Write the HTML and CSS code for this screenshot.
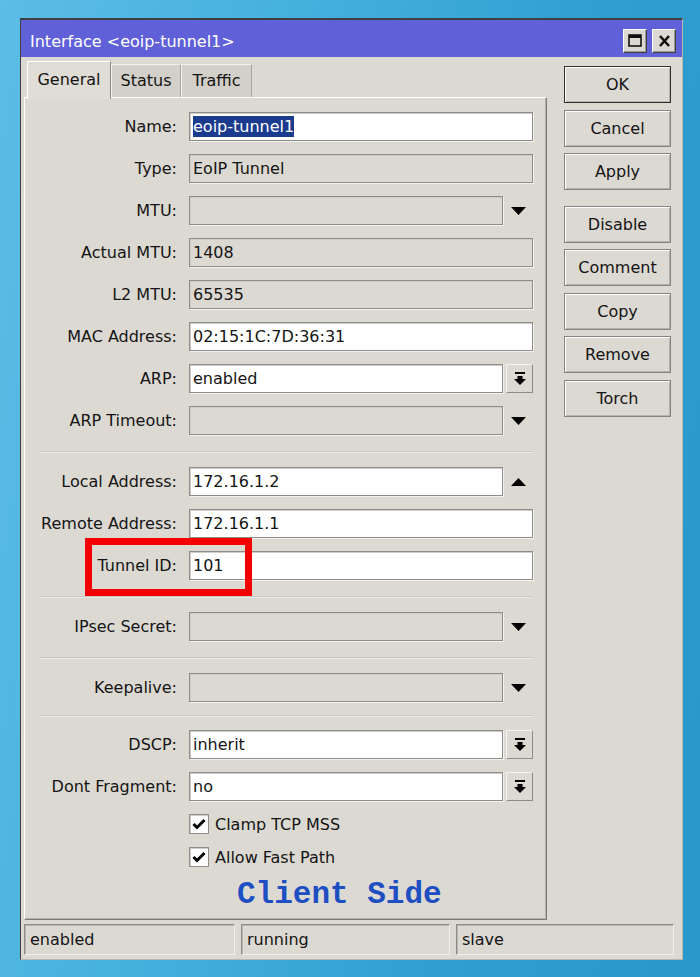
FILE: index.html
```html
<!DOCTYPE html>
<html lang="en">
  <head>
    <meta charset="UTF-8" />
    <meta name="viewport" content="width=device-width, initial-scale=1.0" />
    <title>Interface &lt;eoip-tunnel1&gt;</title>
    <link rel="stylesheet" href="styles.css">
  </head>

  <body>
    <div class="desktop">
      <div class="window">
        <!-- title bar -->
        <div class="titlebar">
          <span class="title">Interface &lt;eoip-tunnel1&gt;</span>
          <div class="title-btns">
            <span class="tbtn">
              <svg width="14" height="13" viewBox="0 0 14 13"><rect x="1" y="1" width="12" height="11" fill="none" stroke="#111" stroke-width="1.6"/><rect x="1" y="1" width="12" height="3" fill="#111"/></svg>
            </span>
            <span class="tbtn">
              <svg width="13" height="12" viewBox="0 0 13 12"><path d="M2 1 L11 11 M11 1 L2 11" stroke="#111" stroke-width="2.6"/></svg>
            </span>
          </div>
        </div>

        <div class="window-body">
          <div class="left">
            <!-- tabs -->
            <div class="tabs">
              <span class="tab active">General</span>
              <span class="tab tab-status">Status</span>
              <span class="tab tab-traffic">Traffic</span>
            </div>

            <div class="panel">
              <div class="form">
                <div class="row">
                  <label>Name:</label>
                  <div class="field"><span class="sel">eoip-tunnel1</span></div>
                </div>
                <div class="row">
                  <label>Type:</label>
                  <div class="field off">EoIP Tunnel</div>
                </div>
                <div class="row">
                  <label>MTU:</label>
                  <div class="field off"></div>
                  <span class="arrow"><svg width="15" height="8" viewBox="0 0 15 8"><polygon points="0,0 15,0 7.5,8" fill="#000"/></svg></span>
                </div>
                <div class="row">
                  <label>Actual MTU:</label>
                  <div class="field off">1408</div>
                </div>
                <div class="row">
                  <label>L2 MTU:</label>
                  <div class="field off">65535</div>
                </div>
                <div class="row">
                  <label>MAC Address:</label>
                  <div class="field">02:15:1C:7D:36:31</div>
                </div>
                <div class="row">
                  <label>ARP:</label>
                  <div class="field">enabled</div>
                  <span class="drop"><svg width="12" height="14" viewBox="0 0 12 14"><rect x="1" y="0" width="10" height="2" fill="#000"/><polygon points="3.5,4 8.5,4 8.5,7 12,7 6,13 0,7 3.5,7" fill="#000"/></svg></span>
                </div>
                <div class="row">
                  <label>ARP Timeout:</label>
                  <div class="field off"></div>
                  <span class="arrow"><svg width="15" height="8" viewBox="0 0 15 8"><polygon points="0,0 15,0 7.5,8" fill="#000"/></svg></span>
                </div>

                <div class="sep"></div>

                <div class="row">
                  <label>Local Address:</label>
                  <div class="field">172.16.1.2</div>
                  <span class="arrow"><svg width="15" height="8" viewBox="0 0 15 8"><polygon points="0,8 15,8 7.5,0" fill="#000"/></svg></span>
                </div>
                <div class="row">
                  <label>Remote Address:</label>
                  <div class="field">172.16.1.1</div>
                </div>
                <div class="row">
                  <label>Tunnel ID:</label>
                  <div class="field">101</div>
                  <!-- red marker round the tunnel id -->
                  <span class="mark"></span>
                </div>

                <div class="sep"></div>

                <div class="row">
                  <label>IPsec Secret:</label>
                  <div class="field off"></div>
                  <span class="arrow"><svg width="15" height="8" viewBox="0 0 15 8"><polygon points="0,0 15,0 7.5,8" fill="#000"/></svg></span>
                </div>

                <div class="sep"></div>

                <div class="row">
                  <label>Keepalive:</label>
                  <div class="field off"></div>
                  <span class="arrow"><svg width="15" height="8" viewBox="0 0 15 8"><polygon points="0,0 15,0 7.5,8" fill="#000"/></svg></span>
                </div>

                <div class="sep tight"></div>

                <div class="row">
                  <label>DSCP:</label>
                  <div class="field">inherit</div>
                  <span class="drop"><svg width="12" height="14" viewBox="0 0 12 14"><rect x="1" y="0" width="10" height="2" fill="#000"/><polygon points="3.5,4 8.5,4 8.5,7 12,7 6,13 0,7 3.5,7" fill="#000"/></svg></span>
                </div>
                <div class="row">
                  <label>Dont Fragment:</label>
                  <div class="field">no</div>
                  <span class="drop"><svg width="12" height="14" viewBox="0 0 12 14"><rect x="1" y="0" width="10" height="2" fill="#000"/><polygon points="3.5,4 8.5,4 8.5,7 12,7 6,13 0,7 3.5,7" fill="#000"/></svg></span>
                </div>

                <div class="check first">
                  <span class="box"><svg width="14" height="12" viewBox="0 0 14 12"><polyline points="1.5,6 5,9.5 12.5,2" fill="none" stroke="#000" stroke-width="3"/></svg></span>
                  <span>Clamp TCP MSS</span>
                </div>
                <div class="check">
                  <span class="box"><svg width="14" height="12" viewBox="0 0 14 12"><polyline points="1.5,6 5,9.5 12.5,2" fill="none" stroke="#000" stroke-width="3"/></svg></span>
                  <span>Allow Fast Path</span>
                </div>

                <div class="note">Client Side</div>
              </div>
            </div>
          </div>

          <!-- buttons on the right -->
          <div class="buttons">
            <span class="btn default">OK</span>
            <span class="btn">Cancel</span>
            <span class="btn">Apply</span>
            <span class="btn spaced">Disable</span>
            <span class="btn">Comment</span>
            <span class="btn">Copy</span>
            <span class="btn">Remove</span>
            <span class="btn">Torch</span>
          </div>
        </div>

        <!-- status bar -->
        <div class="statusbar">
          <span class="cell cell-1">enabled</span>
          <span class="cell cell-2">running</span>
          <span class="cell cell-3">slave</span>
        </div>
      </div>
    </div>
  </body>
</html>
```

FILE: styles.css
```css
* {
  margin: 0;
  padding: 0;
  box-sizing: border-box;
}

body {
  width: 700px;
  height: 977px;
  overflow: hidden;
  background: linear-gradient(100deg, #5cbde5 0%, #45b0de 35%, #2f9fd0 70%, #2a97ca 100%);
  font-family: "DejaVu Sans", sans-serif;
  font-size: 16px;
  color: #141414;
}

.desktop {
  padding: 18px 0 0 20px;
}

.window {
  width: 663px;
  background-color: #dcd9d3;
  border: 1px solid #3f3f3f;
  border-top-width: 2px;
  border-right-color: #b9b7b2;
  border-bottom-color: #b9b7b2;
}

/* title bar */
.titlebar {
  height: 37px;
  background-color: #6060d8;
  display: flex;
  align-items: center;
  justify-content: space-between;
  padding: 0 6px 0 9px;
  color: #fff;
}

.title {
  padding-top: 6px;
  font-size: 16px;
}

.title-btns {
  display: flex;
  gap: 5px;
  padding-top: 4px;
}

.tbtn {
  width: 24px;
  height: 24px;
  background-color: #dcd9d3;
  border: 1px solid;
  border-color: #fff #404040 #404040 #fff;
  box-shadow: inset -1px -1px 0 #9a9894;
  display: flex;
  align-items: center;
  justify-content: center;
}

.window-body {
  display: flex;
  gap: 17px;
  padding: 4px 11px 0 3px;
}

.left {
  width: 523px;
}

/* tabs */
.tabs {
  display: flex;
  height: 36px;
  align-items: flex-end;
  padding-left: 3px;
}

.tab {
  height: 33px;
  line-height: 32px;
  text-align: center;
  background-color: #d3d0ca;
  border: 1px solid #a9a6a1;
  border-bottom: none;
  border-top-color: #f2f1ee;
  border-left-color: #f2f1ee;
}

.tab.active {
  width: 84px;
  height: 38px;
  line-height: 36px;
  margin-bottom: -2px;
  position: relative;
  z-index: 1;
  background-color: #e0ddd7;
  border-color: #fff #8b8985 transparent #fff;
}

.tab-status {
  width: 70px;
}

.tab-traffic {
  width: 71px;
}

.panel {
  height: 823px;
  border: 1px solid;
  border-color: #fff #7d7b77 #7d7b77 #fff;
  box-shadow: inset -1px -1px 0 #b3b0aa;
  padding: 14px 13px 0 0;
}

/* form rows */
.form {
  display: flex;
  flex-direction: column;
  gap: 13px;
}

.row {
  display: flex;
  align-items: center;
  height: 29px;
  position: relative;
}

.row label {
  width: 152px;
  flex: none;
  margin-right: 12px;
  text-align: right;
}

.field {
  flex: 1;
  height: 29px;
  background-color: #fff;
  border: 1px solid #8e8c88;
  box-shadow: inset 1px 1px 0 #cfcdc9, 1px 1px 0 #f3f2ef;
  padding: 0 3px;
  display: flex;
  align-items: center;
  white-space: nowrap;
  overflow: hidden;
}

.field.off {
  background-color: #dcd9d3;
}

.sel {
  background-color: #1b3b8e;
  color: #fff;
  padding: 1px 0;
}

.arrow {
  width: 30px;
  flex: none;
  display: flex;
  justify-content: center;
  padding-left: 1px;
}

.drop {
  width: 27px;
  height: 29px;
  margin-left: 3px;
  flex: none;
  border: 1px solid;
  border-color: #f4f3f0 #8e8c88 #8e8c88 #f4f3f0;
  display: flex;
  align-items: center;
  justify-content: center;
}

/* red marker, drawn over the tunnel id row */
.mark {
  position: absolute;
  left: 60px;
  top: -13px;
  width: 167px;
  height: 58px;
  border: 7px solid #f40000;
}

.sep {
  height: 2px;
  margin: 3px 0 1px 15px;
  border-top: 1px solid #c9c6c0;
  border-bottom: 1px solid #ebe9e5;
}

.sep.tight {
  margin: 0 0 0 15px;
}

/* check boxes */
.check {
  display: flex;
  align-items: center;
  gap: 6px;
  height: 20px;
  padding-left: 164px;
}

.box {
  width: 20px;
  height: 20px;
  background-color: #fff;
  border: 1px solid #8e8c88;
  box-shadow: inset 1px 1px 0 #cfcdc9;
  display: flex;
  align-items: center;
  justify-content: center;
}

.note {
  margin-top: -3px;
  padding-left: 212px;
  font-family: "Liberation Mono", monospace;
  font-weight: 700;
  font-size: 31px;
  color: #1d4ec2;
}

/* buttons column */
.buttons {
  width: 107px;
  padding-top: 5px;
  display: flex;
  flex-direction: column;
  gap: 6.5px;
}

.btn {
  height: 37px;
  display: flex;
  align-items: center;
  justify-content: center;
  border: 1px solid #858380;
  box-shadow: inset 1px 1px 0 #fff, inset -1px -1px 0 #b6b3ad;
}

.btn.default {
  border-color: #2e2e2e;
}

.btn.spaced {
  margin-top: 9px;
}

/* status bar */
.statusbar {
  display: flex;
  gap: 6px;
  padding: 4px 8px 4px 3px;
}

.cell {
  height: 31px;
  padding: 0 5px;
  display: flex;
  align-items: center;
  border: 1px solid;
  border-color: #8e8c88 #f0efec #f0efec #8e8c88;
  box-shadow: inset 1px 1px 0 #b9b6b0;
}

.cell-1 {
  width: 211px;
}

.cell-2 {
  width: 209px;
}

.cell-3 {
  flex: 1;
}
```
